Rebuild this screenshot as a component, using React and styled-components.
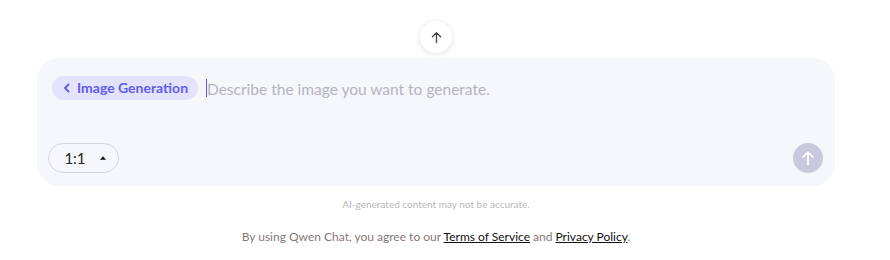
import styled, { createGlobalStyle } from "styled-components"

const GlobalStyle = createGlobalStyle`
  body {
    margin: 0;
    background: #ffffff;
    font-family: Lato, "Noto Sans", sans-serif;
  }
`

const ArrowUp = ({ size = 16, color = "currentColor", width = 1.6 }) => (
  <svg width={size} height={size} viewBox="0 0 16 16" fill="none">
    <path
      d="M8 13.5V2.8M3.6 7.2L8 2.8l4.4 4.4"
      stroke={color}
      strokeWidth={width}
      strokeLinecap="round"
      strokeLinejoin="round"
    />
  </svg>
)

export default function App() {
  return (
    <>
      <GlobalStyle />
      <Page>
        <ScrollButton aria-label="Scroll to top">
          <ArrowUp size={15} color="#444" width={1.4} />
        </ScrollButton>
        <InputBox>
          <TopRow>
            <ModePill>
              <svg width="10" height="10" viewBox="0 0 10 10" fill="none">
                <path
                  d="M6.5 1.5L3 5l3.5 3.5"
                  stroke="#615ced"
                  strokeWidth="1.8"
                  strokeLinecap="round"
                  strokeLinejoin="round"
                />
              </svg>
              Image Generation
            </ModePill>
            <Caret />
            <Placeholder>Describe the image you want to generate.</Placeholder>
          </TopRow>
          <BottomRow>
            <RatioButton>
              1:1
              <svg width="8" height="6" viewBox="0 0 8 6">
                <path d="M4 1.2L7 4.8H1z" fill="#111" />
              </svg>
            </RatioButton>
            <SendButton aria-label="Send">
              <ArrowUp size={18} color="#ffffff" width={1.5} />
            </SendButton>
          </BottomRow>
        </InputBox>
        <Disclaimer>AI-generated content may not be accurate.</Disclaimer>
        <Terms>
          By using Qwen Chat, you agree to our <a href="#">Terms of Service</a> and{" "}
          <a href="#">Privacy Policy</a>.
        </Terms>
      </Page>
    </>
  )
}

const Page = styled.div`
  width: 798px;
  margin-left: 37px;
  padding-top: 21px;
  display: flex;
  flex-direction: column;
  align-items: center;
`

const ScrollButton = styled.button`
  width: 32px;
  height: 32px;
  border-radius: 50%;
  border: none;
  background: #ffffff;
  box-shadow: 0 1px 6px rgba(0, 0, 0, 0.12);
  display: flex;
  align-items: center;
  justify-content: center;
  padding: 0;
  margin-bottom: 5px;
`

const InputBox = styled.div`
  box-sizing: border-box;
  width: 100%;
  height: 128px;
  border-radius: 22px;
  background: #f6f7fb;
  padding: 16px 12px 13px 11px;
  display: flex;
  flex-direction: column;
  justify-content: space-between;
`

const TopRow = styled.div`
  display: flex;
  align-items: center;
  padding-left: 4px;
`

const ModePill = styled.div`
  box-sizing: border-box;
  width: 146px;
  height: 24px;
  padding: 0 0 0 10px;
  border-radius: 12px;
  background: #e3e3fd;
  color: #615ced;
  font-size: 14px;
  font-weight: 700;
  display: flex;
  align-items: center;
  gap: 5px;
`

const Caret = styled.span`
  width: 1px;
  height: 18px;
  background: #615ced;
  margin-left: 8px;
`

const Placeholder = styled.span`
  color: #b3b3c2;
  font-size: 15.5px;
  line-height: 24px;
  margin-top: 3px;
`

const BottomRow = styled.div`
  display: flex;
  align-items: center;
  justify-content: space-between;
`

const RatioButton = styled.button`
  box-sizing: border-box;
  width: 71px;
  height: 30px;
  border-radius: 15px;
  border: 1px solid #d4d5dc;
  background: transparent;
  font-family: Lato, sans-serif;
  font-size: 15px;
  color: #222;
  display: flex;
  align-items: center;
  justify-content: center;
  gap: 13px;
  padding: 0 0 0 4px;
`

const SendButton = styled.button`
  width: 30px;
  height: 30px;
  border-radius: 50%;
  border: none;
  background: #c8c9dc;
  display: flex;
  align-items: center;
  justify-content: center;
  padding: 0;
`

const Disclaimer = styled.div`
  margin-top: 12px;
  font-size: 10px;
  color: #b8b8b8;
`

const Terms = styled.div`
  margin-top: 19px;
  font-size: 12px;
  color: #867878;

  a {
    color: #111;
    text-decoration: underline;
  }
`
